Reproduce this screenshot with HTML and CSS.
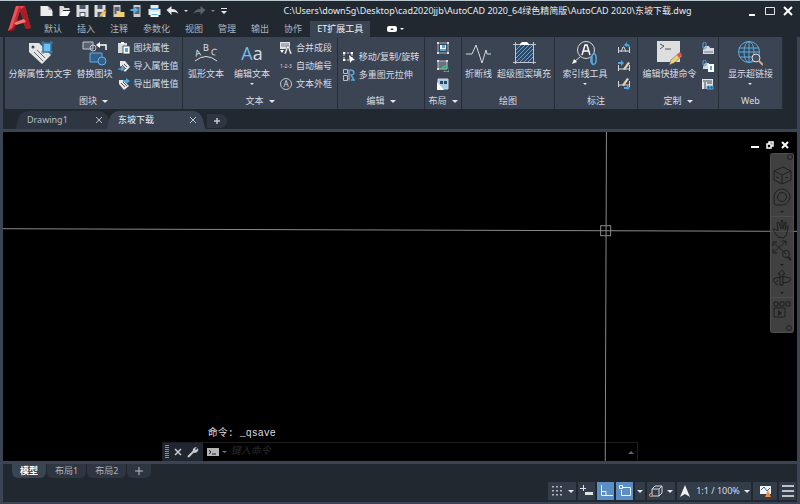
FILE: index.html
```html
<!DOCTYPE html>
<html lang="zh-CN">
<head>
  <meta charset="UTF-8">
  <meta name="viewport" content="width=device-width, initial-scale=1">
  <title>AutoCAD 2020</title>
  <link rel="stylesheet" href="styles.css">
</head>
<body>
<div class="app">

  <header class="header">
    <svg class="logo" viewBox="0 0 24 28" aria-hidden="true">
      <path d="M8 2h9l6 22-5 1-3-7-7 2-2 6-6 1z" fill="#c92a31"/>
      <path d="M12 7l3 8-6 2z" fill="#212830"/>
      <path d="M8 2h3L4 24l-4 3z" fill="#ea5558"/>
      <path d="M17 2l6 22-5 1-6-20z" fill="#a81c24"/>
      <path d="M11 2h6l-4 3z" fill="#e0474b"/>
      <path d="M6 19l10-4 2 3-10 3z" fill="#f07a7b"/>
      <path d="M0 27l5-3 3-4-2 6z" fill="#8e141b"/>
    </svg>
    <div class="header-main">
      <div class="titlebar">
        <div class="quick">
          <button aria-label="新建"><svg viewBox="0 0 12 12"><path d="M0 1h7l5 5v5H0z" fill="#ececec"/><path d="M8 1v4h4z" fill="#aab"/></svg></button>
          <button aria-label="打开"><svg viewBox="0 0 12 12"><path d="M1 11V1h4l1 2h5v2H5z" fill="#d9d9d9"/><path d="M1 11l3-5h8l-3 5z" fill="#fff"/></svg></button>
          <button aria-label="保存"><svg viewBox="0 0 12 12"><path d="M0 0h12v12H0z" fill="#d9dce0"/><path d="M3 0h6v4H3zM3 7h6v5H3z" fill="#4c5563"/><path d="M4 8h4v3H4z" fill="#eee"/></svg></button>
          <button aria-label="另存为"><svg viewBox="0 0 12 12"><path d="M0 0h11v12H0z" fill="#d9dce0"/><path d="M3 0h5v4H3zM3 7h5v5H3z" fill="#4c5563"/><path d="M5 12l1-3 4-4 2 2-4 4z" fill="#f2c34d"/><path d="M9 6l2-2 1 2-1 1z" fill="#e2574c"/></svg></button>
          <button aria-label="从网络打开"><svg viewBox="0 0 12 12"><path d="M1 0h7v12H1z" fill="#c9ccd0"/><path d="M2 2h5v7H2z" fill="#59616d"/><path d="M4 6h3l1 1h4v5H4z" fill="#f0cf7c"/></svg></button>
          <button aria-label="保存到网络"><svg viewBox="0 0 12 12"><path d="M3 0h7v12H3z" fill="#c9ccd0"/><path d="M4 2h5v7H4z" fill="#59616d"/><path d="M0 4h4V2l4 3-4 3V6H0z" fill="#4fb3ef"/></svg></button>
          <button aria-label="打印"><svg viewBox="0 0 12 12"><path d="M2 0h8v3H2zM0 4h12v6H0z" fill="#e6e8ea"/><path d="M2 7h8v5H2z" fill="#fff"/><path d="M2 3h8v2H2zM3 9h6v1H3z" fill="#4fb3ef"/></svg></button>
          <button aria-label="放弃"><svg viewBox="0 0 12 12"><path d="M0 5l5-4v3c4 0 6 2 7 5-2-2-4-2-7-2v3z" fill="#e6e8ea"/></svg></button>
          <button class="drop" aria-label="放弃列表"></button>
          <button aria-label="重做"><svg viewBox="0 0 12 12"><path d="M12 5L7 1v3C3 4 1 6 0 9c2-2 4-2 7-2v3z" fill="#59616d"/></svg></button>
          <button class="drop dim" aria-label="重做列表"></button>
          <button class="customize" aria-label="自定义快速访问工具栏"><svg viewBox="0 0 8 12"><path d="M1 3h6v1H1zM1 6h6L4 9z" fill="#e6e8ea"/></svg></button>
        </div>
        <h1 class="file-path">C:\Users\down5g\Desktop\cad2020jjb\AutoCAD 2020_64绿色精简版\AutoCAD 2020\东坡下载.dwg</h1>
        <div class="window-buttons">
          <button aria-label="最小化"><svg viewBox="0 0 10 10"><path d="M2 9h6" stroke="#fff" stroke-width="2"/></svg></button>
          <button aria-label="最大化"><svg viewBox="0 0 10 10"><path d="M.5 1.500h9v7h-9z" fill="none" stroke="#e4e6e9"/></svg></button>
          <button aria-label="关闭"><svg viewBox="0 0 10 10"><path d="M1 1l8 8M9 1L1 9" stroke="#fff" stroke-width="2"/></svg></button>
        </div>
      </div>
      <nav class="menu">
        <a href="#">默认</a>
        <a href="#">插入</a>
        <a href="#">注释</a>
        <a href="#">参数化</a>
        <a href="#">视图</a>
        <a href="#">管理</a>
        <a href="#">输出</a>
        <a href="#">协作</a>
        <a href="#" class="active">ET扩展工具</a>
        <button class="ribbon-toggle" aria-label="最小化功能区"><svg viewBox="0 0 18 6"><rect width="10" height="6" rx="2" fill="#fff"/><path d="M3 4h4L5 2z" fill="#3b4453"/><path d="M13 2h4l-2 2z" fill="#fff"/></svg></button>
      </nav>
    </div>
  </header>

  <main class="window">
    <section class="ribbon">

      <div class="panel">
        <div class="panel-body">
          <button class="big">
            <svg viewBox="0 0 26 26"><path d="M2 3h10l12 12-9 9L2 12z" fill="#e4e4e4"/><circle cx="6" cy="7" r="1.5" fill="#3b4453"/><path d="M7 12l9 9M10 10l8 8" stroke="#606773"/><path d="M16 3h8v9h-8z" fill="#6cbdf2" stroke="#26496b"/><path d="M14 3h12M14 12h12M16 1v13M24 1v13" stroke="#3d84b8"/></svg>
            分解属性为文字
          </button>
          <button class="big">
            <svg viewBox="0 0 26 26"><path d="M2 2h10v7H2z" fill="#596270" stroke="#c3c7cd"/><circle cx="12" cy="8" r="3" fill="none" stroke="#c3c7cd"/><path d="M25 10V5h-7" fill="none" stroke="#fff" stroke-width="1.5"/><path d="M15 5l4-3v6z" fill="#fff"/><path d="M9 13h12v9H9z" fill="#315f88" stroke="#5fb1e8"/><circle cx="21" cy="21" r="4" fill="#315f88" stroke="#5fb1e8"/></svg>
            替换图块
          </button>
          <div class="stack">
            <button class="small"><svg viewBox="0 0 12 12"><path d="M0 1h9v10H0z" fill="#d7dade"/><path d="M3 0h3v2H3z" fill="#fff"/><path d="M5 4h7v8H5z" fill="#fff" stroke="#505968"/><path d="M7 6h3v4H7z" fill="#4fa6e4"/></svg>图块属性</button>
            <button class="small"><svg viewBox="0 0 12 12"><path d="M2 1h5l5 6-5 5-5-6z" fill="#e8e8e8"/><path d="M4 5l4 4M6 4l3 3" stroke="#444d5a"/><path d="M0 8h3V6l4 3-4 3v-2H0z" fill="#4fa6e4" stroke="#303946" stroke-width=".5"/></svg>导入属性值</button>
            <button class="small"><svg viewBox="0 0 12 12"><path d="M1 2h4l6 6-5 4-5-6z" fill="#e8e8e8"/><path d="M3 5l4 4M5 4l4 4" stroke="#444d5a"/><path d="M5 2h3V0l4 3-4 3V4H5z" fill="#4fa6e4"/></svg>导出属性值</button>
          </div>
        </div>
        <button class="panel-title">图块<i class="arrow"></i></button>
      </div>

      <div class="panel">
        <div class="panel-body wide">
          <button class="big">
            <svg viewBox="0 0 26 26" class="abc"><path d="M2 21q11-9 22 0" fill="none" stroke="#dfe2e6"/><text x="2" y="16" transform="rotate(-14 5 13)">A</text><text x="10" y="11">B</text><text x="18" y="15" transform="rotate(14 21 12)">C</text></svg>
            弧形文本
          </button>
          <button class="big">
            <span class="aa"><b>A</b>a</span>
            编辑文本
            <i class="arrow tiny"></i>
          </button>
          <div class="stack">
            <button class="small"><svg viewBox="0 0 12 12"><path d="M0 0h10v7H0z" fill="#e4e4e4"/><path d="M1 2h8M1 4h8" stroke="#777f8a"/><path d="M4 12l3-8h2l3 8h-2l-2-6-2 6z" fill="#fff" stroke="#3b4453" stroke-width=".5"/><path d="M0 8h4l-2 3z" fill="#fff"/></svg>合并成段</button>
            <button class="small"><span class="nums">1-2-3</span>自动编号</button>
            <button class="small"><span class="circle-a">A</span>文本外框</button>
          </div>
        </div>
        <button class="panel-title">文本<i class="arrow"></i></button>
      </div>

      <div class="panel">
        <div class="panel-body centered">
          <div class="stack">
            <button class="small"><svg viewBox="0 0 12 12"><path d="M1 2h8v7H1z" fill="none" stroke="#dfe2e6" stroke-dasharray="2 1"/><path d="M0 1h2v2H0zM8 1h2v2H8zM0 8h2v2H0z" fill="#fff"/><path d="M6 4l6 5-3 .5L7 12z" fill="#fff"/></svg>移动/复制/旋转</button>
            <button class="small"><svg viewBox="0 0 12 12"><path d="M.5.5h4v4h-4zM.5 6.500h4v5h-4zM6 .5v11" fill="none" stroke="#b9bec6"/><path d="M7 1c5 0 5 5 1 5l3 5H8" fill="none" stroke="#58a9df" stroke-width="1.5"/></svg>多重图元拉伸</button>
          </div>
        </div>
        <button class="panel-title">编辑<i class="arrow"></i></button>
      </div>

      <div class="panel">
        <div class="panel-body centered">
          <div class="stack">
            <button class="small" aria-label="对齐空间"><svg viewBox="0 0 12 12"><path d="M1 1h10v10H1z" fill="none" stroke="#a9afb8"/><path d="M3 3h6v6H3z" fill="#f0f0f0"/><path d="M5 3h3v3H5zM3 7h6v2H3z" fill="#4fa6e4"/><path d="M0 0h2v2H0zM10 0h2v2h-2zM0 10h2v2H0zM10 10h2v2h-2z" fill="#d5d8dc"/></svg></button>
            <button class="small" aria-label="同步视口"><svg viewBox="0 0 12 12"><path d="M1 1h9v8H1z" fill="#68717e" stroke="#b9bec6"/><path d="M0 0h2v2H0zM9 0h2v2H9zM0 8h2v2H0z" fill="#d5d8dc"/><path d="M5 9a3 2.500 0 0 1 5-2M12 8a3 2.500 0 0 1-5 3" fill="none" stroke="#3fc47c" stroke-width="1.5"/></svg></button>
            <button class="small" aria-label="合并布局"><svg viewBox="0 0 12 12"><path d="M1 1h10v10H1z" fill="#9fcdee" stroke="#d5d8dc"/><path d="M3 3h3v3H3zM7 3h3v3H7z" fill="#3b4453"/><path d="M0 4l7 8H0z" fill="#fff"/></svg></button>
          </div>
        </div>
        <button class="panel-title">布局<i class="arrow"></i></button>
      </div>

      <div class="panel">
        <div class="panel-body">
          <button class="big">
            <svg viewBox="0 0 26 26"><path d="M1 14h6l4-9 6 18 4-13 1 4h4" fill="none" stroke="#d5d8dc"/></svg>
            折断线
          </button>
          <button class="big">
            <svg viewBox="0 0 26 26"><path d="M5 5h17v17H5z" fill="#2a4a6b"/><path d="M5 10l5-5M5 14l9-9M5 18l13-13M5 22L22 5M9 22l13-13M13 22l9-9M17 22l5-5" stroke="#64a7d8"/><path d="M4.500 2v22M22.500 2v22M2 4.500h23M2 22.500h23" stroke="#c3c7cd"/><path d="M9 4l2-2h5l2 2v1H9z" fill="#fff"/></svg>
            超级图案填充
          </button>
        </div>
        <div class="panel-title">绘图</div>
      </div>

      <div class="panel">
        <div class="panel-body wide">
          <button class="big">
            <svg viewBox="0 0 26 26"><circle cx="14" cy="10" r="8.500" fill="none" stroke="#d5d8dc"/><path d="M8 17l-6 5" stroke="#d5d8dc"/><path d="M0 24l2-5 3 3z" fill="#fff"/><path d="M10 15l3-10h2l3 10M11 11h6" fill="none" stroke="#fff" stroke-width="1.500"/><path d="M20 23v-7q2-5 4 0v6q-2 5-5 0v-5" fill="none" stroke="#56a9e2" stroke-width="1.500"/></svg>
            索引线工具
            <i class="arrow tiny"></i>
          </button>
          <div class="stack">
            <button class="small" aria-label="附着引线"><svg viewBox="0 0 12 12"><path d="M.5 5v6M11.500 5v6M1 9h10M3 10l2-5h1l2 5" fill="none" stroke="#d5d8dc"/><path d="M6 3l3-3v2q4 0 2 4 0-2-2-2v1z" fill="#4fa6e4"/></svg></button>
            <button class="small" aria-label="尺寸重置"><svg viewBox="0 0 12 12"><path d="M.5 5v6M11.500 5v6M1 9h10" stroke="#d5d8dc"/><path d="M0 2h3V0l3 3-3 3V4H0z" fill="#4fa6e4"/><path d="M5 9l5-7 2 1-5 7z" fill="#ead4ad"/></svg></button>
            <button class="small" aria-label="尺寸输出"><svg viewBox="0 0 12 12"><path d="M.5 3v6M11.500 3v6M1 7h10" stroke="#d5d8dc"/><path d="M4 7l5-7 2 1-5 7z" fill="#ead4ad"/><path d="M6 9h3V7l3 3-3 2v-1H6z" fill="#4fa6e4"/></svg></button>
          </div>
        </div>
        <div class="panel-title">标注</div>
      </div>

      <div class="panel">
        <div class="panel-body">
          <button class="big">
            <svg viewBox="0 0 26 26"><path d="M1 1h23v21H1z" fill="#dedede"/><path d="M4 4l4 2-4 3M9 9h6" fill="none" stroke="#4d5561"/><path d="M13 25l2-5 8-7 3 3-8 7z" fill="#f3cf73" stroke="#4d5561" stroke-width=".5"/><path d="M21 15l3-3 2 3-3 3z" fill="#df5548"/></svg>
            编辑快捷命令
          </button>
          <div class="stack">
            <button class="small" aria-label="附着数据"><svg viewBox="0 0 12 12"><path d="M3 4h4l1 2h4v6H1V8z" fill="#d5d8dc"/><path d="M2 10h9" stroke="#717a87"/><path d="M1 6V1q2-2 3 0v5q-1 2-3 0" fill="none" stroke="#4fa6e4"/></svg></button>
            <button class="small" aria-label="列出数据"><svg viewBox="0 0 12 12"><path d="M3 3h4v6H1V7z" fill="#d5d8dc"/><path d="M6 4h6v8H6z" fill="#fff"/><path d="M8 6h2v4H8z" fill="#4fa6e4"/><path d="M1 5V1q2-2 3 0v4q-1 2-3 0" fill="none" stroke="#4fa6e4"/></svg></button>
            <button class="small" aria-label="工具选项板"><svg viewBox="0 0 12 12"><path d="M0 1h11v10H0z" fill="#e3e5e8"/><path d="M1 3h9M3 4v7M5 5h5" stroke="#3b4453"/><path d="M5 8h3v3H5zM8 8h3v3H8z" fill="#3b4453" stroke="#4fa6e4"/></svg></button>
          </div>
        </div>
        <button class="panel-title">定制<i class="arrow"></i></button>
      </div>

      <div class="panel">
        <div class="panel-body">
          <button class="big">
            <svg viewBox="0 0 26 26"><g fill="none" stroke="#5cade3"><circle cx="12" cy="12" r="10.500"/><ellipse cx="12" cy="12" rx="5" ry="10.500"/><path d="M12 1v22M2 8h20M2 12h20M3 17h18"/></g><circle cx="19" cy="18" r="4" fill="#48515f" stroke="#dfe2e6"/><path d="M22 21l4 4" stroke="#e3a868" stroke-width="2"/></svg>
            显示超链接
            <i class="arrow tiny"></i>
          </button>
        </div>
        <div class="panel-title">Web</div>
      </div>
    </section>

    <div class="doc-tabs">
      <div class="doc-tab"><a href="#">Drawing1</a><button aria-label="关闭 Drawing1"><svg viewBox="0 0 8 8"><path d="M1 1l6 6M7 1L1 7"/></svg></button></div>
      <div class="doc-tab active"><a href="#">东坡下载</a><button aria-label="关闭 东坡下载"><svg viewBox="0 0 8 8"><path d="M1 1l6 6M7 1L1 7"/></svg></button></div>
      <button class="new-tab" aria-label="新图形"><svg viewBox="0 0 8 8"><path d="M4 1v6M1 4h6" stroke="#c3c7cd" stroke-width="1.500"/></svg></button>
    </div>

    <section class="canvas">
      <svg class="crosshair" aria-hidden="true">
        <line x1="0" y1="29.400%" x2="100%" y2="30.200%"/>
        <line x1="76%" y1="0" x2="75.850%" y2="100%"/>
        <svg x="75.900%" y="30%" overflow="visible"><rect x="-5" y="-5" width="10" height="10"/></svg>
      </svg>

      <div class="view-side">
        <div class="view-buttons">
          <button aria-label="最小化视图"><svg viewBox="0 0 8 8"><path d="M0 6h8" stroke="#fff" stroke-width="2"/></svg></button>
          <button aria-label="还原视图"><svg viewBox="0 0 8 8"><path d="M1 3h4v4H1zM3 3V1h4v4H5" fill="none" stroke="#fff" stroke-width="1.500"/></svg></button>
          <button aria-label="关闭视图"><svg viewBox="0 0 8 8"><path d="M1 1l6 6M7 1L1 7" stroke="#fff" stroke-width="2"/></svg></button>
        </div>
        <svg class="navbar" viewBox="0 0 24 180" role="img" aria-label="导航栏">
          <rect x=".5" y=".5" width="23" height="179" rx="2" fill="#474747" stroke="#585858"/>
          <path d="M1 63.500h22M1 144.500h22" stroke="#565656"/>
          <g fill="none" stroke="#232323">
            <circle cx="20" cy="4" r="2.500"/>
            <path d="M4 18l9-4 8 4v9l-9 4-8-4zM4 18l8 4 9-4M12 22v9M6 24l3 1M15 25l3-1"/>
            <path d="M4 44a8 8 0 1 1 8 8H6q-2 0-2-3z"/><circle cx="12" cy="44" r="4.500"/>
            <path d="M8 84l-5-7q0-2 2-1l3 2-1-8q1-2 2 0l2 6V68q1-2 2 0v8l2-7q2-1 1 2l-1 6 2-4q2-1 1 2l-2 8-3 2z"/>
            <path d="M3 89l13 12M3 100L16 88M3 93v-4h4M12 88h4v4M3 96v4h4"/><circle cx="16" cy="101" r="3.500"/><path d="M18 104l3 3" stroke-width="2"/>
            <path d="M10 132v-11H8l4-4 3 4h-2v11zM6 130q-6-3 0-5 8-3 14 0 3 4-7 5M8 127l-3 3 3 2"/>
            <path d="M4 149h4v4H4zM10 149h4v4h-4zM16 149h4v4h-4zM4 155h11v9H4z"/>
            <circle cx="19" cy="175" r="2.500"/>
          </g>
          <path d="M10 58h4l-2 2zM10 111h4l-2 2zM10 139h4l-2 2zM8 157l4 3-4 3z" fill="#222"/>
        </svg>
      </div>

      <div class="command">
        <p class="history">命令: _qsave</p>
        <div class="command-line">
          <div class="command-tools">
            <span class="grip"></span>
            <button aria-label="关闭命令行"><svg viewBox="0 0 8 8"><path d="M1 1l6 6M7 1L1 7" stroke="#c7cad0" stroke-width="1.500"/></svg></button>
            <button aria-label="自定义"><svg viewBox="0 0 12 12" class="wrench"><path d="M1 11l6-6" stroke="#c7cad0" stroke-width="2"/><path d="M10 1L8 3l1 1 2-2q1 4-3 5Q5 6 6 3q1-2 4-2" fill="#c7cad0"/></svg></button>
          </div>
          <svg class="prompt-icon" viewBox="0 0 20 10" aria-hidden="true"><path d="M0 1h12v8H0z" fill="#b5b5b5"/><path d="M2 3l2 2-2 2M5 7h4" fill="none" stroke="#222"/><path d="M15 4h5l-2.500 2z" fill="#777"/></svg>
          <input type="text" aria-label="命令" placeholder="键入命令">
          <button class="history-toggle" aria-label="命令历史"><svg viewBox="0 0 6 4"><path d="M0 4h6L3 1z" fill="#666"/></svg></button>
        </div>
      </div>
    </section>

    <footer class="footer">
      <nav class="layout-tabs">
        <a href="#" class="active">模型</a>
        <a href="#">布局1</a>
        <a href="#">布局2</a>
        <button aria-label="新建布局"><svg viewBox="0 0 8 8"><path d="M4 0v8M0 4h8" stroke="#b9bec6"/></svg></button>
      </nav>
      <div class="status">
        <button class="w-28" aria-label="栅格"><svg viewBox="0 0 14 12"><path d="M3 1v10M7 1v10M11 1v10" stroke="#dfe2e6" stroke-dasharray="1.500 2.500" stroke-width="1.500"/></svg><i class="arrow"></i></button>
        <button class="w-17" aria-label="动态输入"><svg viewBox="0 0 14 12"><path d="M3.500 0v6M0 3.500h6" stroke="#dfe2e6"/><path d="M5 7h8v3H5z" fill="#dfe2e6"/></svg></button>
        <button class="w-17 on" aria-label="正交"><svg viewBox="0 0 14 12"><path d="M2.500 0v10.500H14M3 6.500h4v4" fill="none" stroke="#eef4fa"/></svg></button>
        <button class="w-17 on" aria-label="对象捕捉"><svg viewBox="0 0 14 12"><path d="M5 2.500h7.500v8h-9V5" fill="none" stroke="#eef4fa"/><path d="M1.500.5h3v3h-3z" fill="none" stroke="#eef4fa"/></svg></button>
        <button class="w-10" aria-label="对象捕捉设置"><i class="arrow"></i></button>
        <button class="w-28" aria-label="三维对象捕捉"><svg viewBox="0 0 14 12"><path d="M3 4h7v7H3zM3 4l3-3h7v7l-3 3M10 4l3-3" fill="none" stroke="#d5d8dc"/><circle cx="2" cy="10" r="1.500" fill="#3b4453" stroke="#e79366"/></svg><i class="arrow"></i></button>
        <button class="scale"><svg viewBox="0 0 14 12"><path d="M7 0l5 12-5-3-5 3z" fill="#eef0f2"/></svg>1:1 / 100%<i class="arrow"></i></button>
        <button class="w-24" aria-label="图形性能"><svg viewBox="0 0 14 12"><path d="M2 1h11v8H2z" fill="#f1f2f3"/><path d="M3 5l3-3 3 4 3-3" fill="none" stroke="#3b6786"/><path d="M10 5l3 7H7z" fill="#ee8a42"/></svg></button>
        <button class="w-17" aria-label="自定义"><svg viewBox="0 0 14 12"><path d="M1 1h12M1 6h12M1 11h12" stroke="#eef0f2" stroke-width="1.500"/></svg></button>
      </div>
    </footer>
  </main>
</div>
</body>
</html>
```

FILE: styles.css
```css
* {
  box-sizing: border-box;
}

body {
  margin: 0;
  background: #212830;
  color: #d9dce1;
  font-family: "Noto Sans", "Noto Sans CJK SC", sans-serif;
  font-size: 9px;
  line-height: 14px;
}

button {
  display: flex;
  align-items: center;
  justify-content: center;
  padding: 0;
  border: 0;
  background: none;
  color: inherit;
  font: inherit;
  white-space: nowrap;
}

a {
  color: inherit;
  text-decoration: none;
  white-space: nowrap;
}

svg {
  display: block;
  flex: none;
}

.app {
  display: flex;
  flex-direction: column;
  min-height: 100vh;
  border-top: 1px solid #b9c6cf;
  border-bottom: 2px solid #3b4453;
}

/* title bar and menu */

.header {
  display: flex;
  height: 36px;
}

.logo {
  width: 24px;
  height: 28px;
  margin: 3px 8px 0;
}

.header-main {
  flex: 1;
}

.titlebar {
  display: flex;
  align-items: center;
  height: 20px;
}

.quick {
  display: flex;
  align-items: center;
  gap: 5px;
}

.quick svg {
  width: 13px;
  height: 12px;
}

.quick .customize svg {
  width: 8px;
}

.drop {
  border: 2px solid transparent;
  border-top-color: #d9dce1;
  border-bottom: 0;
}

.drop.dim {
  border-top-color: #7a828e;
}

.file-path {
  flex: 1;
  margin: 0;
  color: #e8eaed;
  font-size: 9px;
  font-weight: normal;
  text-align: center;
  white-space: nowrap;
}

.window-buttons {
  display: flex;
  gap: 8px;
  padding-right: 7px;
}

.window-buttons svg {
  width: 10px;
  height: 10px;
}

.menu {
  display: flex;
  gap: 1px;
  height: 16px;
  margin-left: -3px;
  color: #aeb4bd;
}

.menu a {
  padding: 1px 7px 0;
}

.menu .active {
  background: #3b4453;
  color: #f0f1f3;
}

.ribbon-toggle svg {
  width: 18px;
  height: 6px;
  margin-left: 16px;
}

/* ribbon */

.window {
  flex: 1;
  display: flex;
  flex-direction: column;
  border: solid #3b4453;
  border-width: 0 3px;
}

.ribbon {
  display: grid;
  grid-template-columns: 178fr 155fr 87fr 37fr 93fr 83fr 81fr 64fr;
  margin: 0 14px 0 2px;
}

.panel {
  display: flex;
  flex-direction: column;
  border-right: 1px solid #262e38;
  background: #3b4453;
}

.panel-body {
  flex: 1;
  display: flex;
  justify-content: center;
  gap: 5px;
  padding-top: 2px;
}

.panel-body.wide {
  gap: 10px;
}

.panel-body.centered {
  align-items: center;
}

.big {
  flex-direction: column;
  justify-content: flex-start;
}

.big svg {
  width: 26px;
  height: 26px;
  margin: 1px 0;
}

.abc text {
  fill: #dfe2e6;
  font-size: 9px;
}

.aa {
  height: 28px;
  font-family: "Open Sans", sans-serif;
  font-size: 18px;
  line-height: 28px;
}

.aa b {
  color: #6cbdf2;
  font-weight: normal;
}

.small {
  gap: 4px;
  height: 18px;
  justify-content: flex-start;
}

.small svg {
  width: 12px;
  height: 12px;
}

.nums {
  width: 12px;
  font-size: 5px;
}

.circle-a {
  width: 12px;
  height: 12px;
  border: 1px solid #c3c7cd;
  border-radius: 50%;
  font-size: 8px;
  line-height: 10px;
  text-align: center;
}

.panel-title {
  display: flex;
  justify-content: center;
  align-items: center;
  gap: 5px;
  height: 16px;
}

.arrow {
  border: 3px solid transparent;
  border-top-color: #e4e6e9;
  border-bottom: 0;
}

.arrow.tiny {
  margin-top: 2px;
  border-width: 2px 2px 0;
}

/* drawing tabs */

.doc-tabs {
  display: flex;
  align-items: flex-end;
  height: 20px;
  padding-left: 15px;
}

.doc-tab {
  position: relative;
  z-index: 0;
  display: flex;
  align-items: center;
  justify-content: space-between;
  width: 91px;
  height: 18px;
  padding: 0 6px 0 9px;
  color: #b9bec6;
}

.doc-tab::before {
  content: "";
  position: absolute;
  inset: 0 50% 0 0;
  z-index: -1;
  border-radius: 8px 0 0 0;
  background: #2e3641;
  transform: skewX(-14deg);
}

.doc-tab::after {
  content: "";
  position: absolute;
  inset: 0 0 0 40%;
  z-index: -1;
  border-radius: 0 8px 0 0;
  background: #2e3641;
  transform: skewX(14deg);
}

.doc-tab.active {
  width: 94px;
  color: #eef0f2;
}

.doc-tab.active::before,
.doc-tab.active::after {
  background: #3b4453;
}

.doc-tab svg {
  width: 8px;
  height: 8px;
  fill: none;
  stroke: #b9bec6;
}

.new-tab {
  width: 20px;
  height: 14px;
  margin: 0 0 1px 4px;
  border-radius: 0 8px 8px 0;
  background: #2e3641;
}

.new-tab svg {
  width: 8px;
  height: 8px;
}

/* drawing area */

.canvas {
  position: relative;
  flex: 1;
  display: flex;
  flex-direction: column;
  justify-content: space-between;
  border: solid #3b4453;
  border-width: 3px 0;
  background: #000;
}

.crosshair {
  position: absolute;
  inset: 0;
  width: 100%;
  height: 100%;
  fill: none;
  stroke: #8a8a8a;
}

.view-side {
  display: flex;
  flex-direction: column;
  align-items: flex-end;
  gap: 4px;
  padding-top: 9px;
}

.view-buttons {
  display: flex;
  gap: 7px;
  padding-right: 8px;
}

.view-buttons svg {
  width: 8px;
  height: 8px;
}

.navbar {
  position: relative;
  width: 24px;
  height: 180px;
  margin-right: 3px;
  opacity: 0.9;
}

.command {
  width: 60%;
  margin-left: 20%;
}

.history {
  margin: 0 0 1px 46px;
  font-family: "Liberation Mono", "Noto Sans CJK SC", monospace;
  font-size: 10px;
}

.command-line {
  display: flex;
  align-items: center;
  height: 19px;
  border: 1px solid #1d1d1d;
  border-bottom: 0;
}

.command-tools {
  display: flex;
  align-items: center;
  gap: 5px;
  height: 18px;
  padding: 0 4px 0 2px;
  background: #20262f;
}

.command-tools svg {
  width: 8px;
  height: 8px;
}

.command-tools .wrench {
  width: 12px;
  height: 12px;
}

.grip {
  width: 4px;
  height: 14px;
  background: repeating-linear-gradient(#888f99 0 1px, transparent 1px 2px);
}

.prompt-icon {
  width: 20px;
  height: 10px;
  margin: 0 4px;
}

.command-line input {
  flex: 1;
  min-width: 0;
  padding: 0;
  border: 0;
  background: none;
  color: #ccc;
  font: italic 10px/14px "Liberation Mono", "Noto Sans CJK SC", monospace;
}

.command-line input::placeholder {
  color: #2c2c2c;
}

.history-toggle svg {
  width: 6px;
  height: 4px;
  margin-right: 3px;
}

/* layout tabs and status bar */

.layout-tabs {
  display: flex;
  gap: 1px;
  height: 18px;
  padding-left: 9px;
  color: #aeb4bd;
}

.layout-tabs a,
.layout-tabs button {
  height: 14px;
  padding: 0 8px;
  border-radius: 0 0 6px 6px;
  background: #2e3641;
}

.layout-tabs .active {
  background: #3b4453;
  color: #fff;
  font-weight: bold;
}

.layout-tabs svg {
  width: 8px;
  height: 8px;
}

.status {
  display: flex;
  justify-content: flex-end;
  gap: 2px;
  height: 20px;
  padding: 0 1px 2px 0;
}

.status button {
  gap: 4px;
  background: #333c49;
}

.status svg {
  width: 14px;
  height: 12px;
}

.status .on {
  background: #5b8fc4;
}

.w-10 {
  width: 10px;
}

.w-17 {
  width: 17px;
}

.w-24 {
  width: 24px;
}

.w-28 {
  width: 28px;
}

.status .scale {
  width: 74px;
}
```
